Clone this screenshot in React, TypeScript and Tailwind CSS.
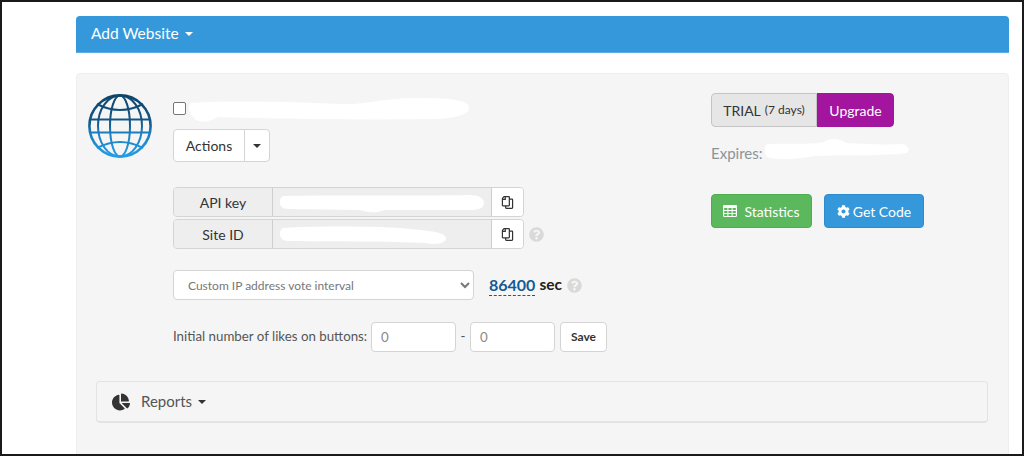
import React from "react";
import { FaCog, FaChartPie, FaQuestionCircle, FaRegCopy } from "react-icons/fa";

function Caret({ className = "" }: { className?: string }) {
  return <span className={"inline-block w-0 h-0 border-x-[4px] border-x-transparent border-t-[4px] " + className} />;
}

function Blob({ d, w, h, className = "" }: { d: string; w: number; h: number; className?: string }) {
  return (
    <svg width={w} height={h} viewBox={`0 0 ${w} ${h}`} className={"absolute " + className}>
      <path d={d} fill="#ffffff" />
    </svg>
  );
}

function Globe() {
  return (
    <svg width="64" height="64" viewBox="0 0 64 64" fill="none" className="shrink-0">
      <defs>
        <linearGradient id="g" gradientUnits="userSpaceOnUse" x1="0" y1="0" x2="0" y2="64">
          <stop offset="0" stopColor="#0f4468" />
          <stop offset="0.45" stopColor="#13588a" />
          <stop offset="0.6" stopColor="#1a7cbd" />
          <stop offset="1" stopColor="#25a0e6" />
        </linearGradient>
      </defs>
      <g stroke="url(#g)" strokeWidth="2">
        <circle cx="32" cy="32" r="30.6" strokeWidth="2.6" />
        <ellipse cx="32" cy="32" rx="10" ry="30.5" />
        <ellipse cx="32" cy="32" rx="22" ry="30.5" />
        <path d="M3 25.5H61M3 38.5H61" />
        <path d="M9 10Q32 22 55 10M9 54Q32 42 55 54" />
      </g>
    </svg>
  );
}

function GridIcon() {
  return (
    <svg width="14" height="12" viewBox="0 0 14 12" className="mr-[7px]" fill="#ffffff">
      <path d="M1.2 0H12.8C13.5 0 14 .5 14 1.2V10.8C14 11.5 13.5 12 12.8 12H1.2C.5 12 0 11.5 0 10.8V1.2C0 .5 .5 0 1.2 0Z" />
      <g fill="#5cb85c">
        <rect x="1.2" y="3" width="3.2" height="2" />
        <rect x="5.4" y="3" width="3.2" height="2" />
        <rect x="9.6" y="3" width="3.2" height="2" />
        <rect x="1.2" y="6" width="3.2" height="2" />
        <rect x="5.4" y="6" width="3.2" height="2" />
        <rect x="9.6" y="6" width="3.2" height="2" />
        <rect x="1.2" y="9" width="3.2" height="2" />
        <rect x="5.4" y="9" width="3.2" height="2" />
        <rect x="9.6" y="9" width="3.2" height="2" />
      </g>
    </svg>
  );
}

function KeyRow({ label, blob, help }: { label: string; blob: React.ReactNode; help?: boolean }) {
  return (
    <div className="flex items-center">
      <div className="flex w-[351px] h-[30px] rounded border border-[#d4d4d4] overflow-hidden text-[14px] text-[#333]">
        <div className="w-[99px] shrink-0 bg-[#eeeeee] border-r border-[#cfcfcf] flex items-center justify-center">{label}</div>
        <div className="relative w-[218px] shrink-0 bg-[#eeeeee]">{blob}</div>
        <div className="flex-1 bg-white border-l border-[#cfcfcf] flex items-center justify-center text-[#333]">
          <FaRegCopy className="text-[13px] -scale-x-100" />
        </div>
      </div>
      {help && <FaQuestionCircle className="ml-[5px] text-[15px] text-[#d9d9d9]" />}
    </div>
  );
}

export default function App() {
  return (
    <div className="relative w-[1024px] h-[456px] overflow-hidden bg-white border-2 border-[#1a1a1a] pl-[74px] pr-[13px] pt-[14px] font-['Lato','Open_Sans',sans-serif]">
      <div className="h-[37px] bg-[#3498db] rounded-t border-b border-[#5aaee4] flex items-center pl-[15px] text-white text-[15.5px]">
        Add Website
        <Caret className="ml-[6px] border-t-white" />
      </div>

      <div className="mt-[20px] h-[400px] bg-[#f5f5f5] border border-[#eeeeee] rounded pl-[11px] pr-[20px] pt-[19px]">
        <div className="flex h-[288px]">
          <div className="w-[85px] shrink-0 pt-[1px]">
            <Globe />
          </div>

          <div className="w-[538px] shrink-0 relative">
            <div className="h-[36px] flex items-start pt-[9px]">
              <span className="w-[13px] h-[13px] rounded-[2px] border border-[#767676] bg-white" />
              <Blob
                className="left-[15px] top-[2px]"
                w={282}
                h={28}
                d="M3 8C40 5 110 7 150 9C180 10 200 2 230 3C255 3 280 4 281 12C282 20 265 24 240 24C190 25 90 24 30 22C20 28 8 28 5 22C0 16 0 10 3 8Z"
              />
            </div>
            <div className="flex w-[97px] h-[33px] rounded border border-[#d4d4d4] bg-white text-[14px] text-[#333]">
              <div className="w-[71px] border-r border-[#d4d4d4] flex items-center justify-center">Actions</div>
              <div className="flex-1 flex items-center justify-center">
                <Caret className="border-t-[#333]" />
              </div>
            </div>

            <div className="mt-[25px] flex flex-col gap-[2px]">
              <KeyRow
                label="API key"
                blob={
                  <Blob
                    className="left-[7px] top-[7px]"
                    w={204}
                    h={19}
                    d="M4 1C50 0 140 1 190 0C200 0 204 4 204 8C204 13 198 15 190 15C170 15 130 15 105 15C95 19 85 17 80 15L8 14C2 14 0 11 0 7C0 4 1 1 4 1Z"
                  />
                }
              />
              <KeyRow
                label="Site ID"
                help
                blob={
                  <Blob
                    className="left-[7px] top-[6px]"
                    w={166}
                    h={20}
                    d="M4 2C40 0 100 0 130 3C150 5 165 6 166 12C166 18 155 19 145 17C110 15 60 16 8 15C2 15 0 11 0 8C0 5 1 2 4 2Z"
                  />
                }
              />
            </div>

            <div className="mt-[21px] flex items-center">
              <select className="w-[301px] h-[30px] rounded border border-[#d4d4d4] bg-white text-[12px] text-[#777] pl-[10px] outline-none">
                <option>Custom IP address vote interval</option>
              </select>
              <a className="ml-[15px] text-[16px] font-bold leading-[20px] text-[#135a96] border-b border-dashed border-[#135a96]">86400</a>
              <span className="ml-[4px] text-[15.5px] font-bold text-[#222]">sec</span>
              <FaQuestionCircle className="ml-[5px] text-[15px] text-[#d9d9d9]" />
            </div>

            <div className="mt-[22px] flex items-center text-[13.3px] text-[#555]">
              <span className="w-[194px] whitespace-nowrap">Initial number of likes on buttons:</span>
              <input readOnly value="0" className="ml-[4px] w-[85px] h-[30px] rounded border border-[#d4d4d4] bg-white px-[9px] text-[#888] outline-none" />
              <span className="w-[14px] text-center">-</span>
              <input readOnly value="0" className="w-[85px] h-[30px] rounded border border-[#d4d4d4] bg-white px-[9px] text-[#888] outline-none" />
              <button className="ml-[5px] w-[47px] h-[30px] rounded border border-[#d4d4d4] bg-white text-[12px] font-bold text-[#333]">Save</button>
            </div>
          </div>

          <div className="flex-1">
            <div className="flex h-[34px] w-[183px] rounded overflow-hidden text-[14px]">
              <div className="w-[106px] bg-[#e6e6e6] border border-[#c4c4c4] rounded-l flex items-center justify-center text-[#333]">
                TRIAL<span className="ml-[4px] text-[12px]">(7 days)</span>
              </div>
              <div className="flex-1 bg-[#a3159f] rounded-r flex items-center justify-center text-white">Upgrade</div>
            </div>
            <div className="relative mt-[15px] h-[22px] text-[15px] leading-[22px] text-[#8a9499]">
              Expires:
              <Blob
                className="left-[53px] top-[-5px]"
                w={146}
                h={24}
                d="M3 7C20 6 50 8 60 5C68 0 75 2 82 6C100 7 125 8 138 7C145 8 146 14 143 16C125 19 80 18 50 19C30 23 10 23 3 20C0 16 0 10 3 7Z"
              />
            </div>
            <div className="mt-[30px] flex gap-[12px] text-[14px] text-white">
              <button className="w-[101px] h-[34px] rounded bg-[#5cb85c] border border-[#4cae4c] flex items-center justify-center">
                <GridIcon />
                Statistics
              </button>
              <button className="w-[100px] h-[34px] rounded bg-[#3498db] border border-[#2f8ccc] flex items-center justify-center">
                <FaCog className="text-[13px] mr-[3px]" />
                Get Code
              </button>
            </div>
          </div>
        </div>

        <div className="ml-[8px] h-[42px] w-[892px] rounded border border-[#e3e3e3] border-b-2 flex items-center pl-[15px] text-[15px] text-[#555]">
          <FaChartPie className="text-[18px] text-[#333] mr-[11px]" />
          Reports
          <Caret className="ml-[6px] border-t-[#333]" />
        </div>
      </div>
    </div>
  );
}
